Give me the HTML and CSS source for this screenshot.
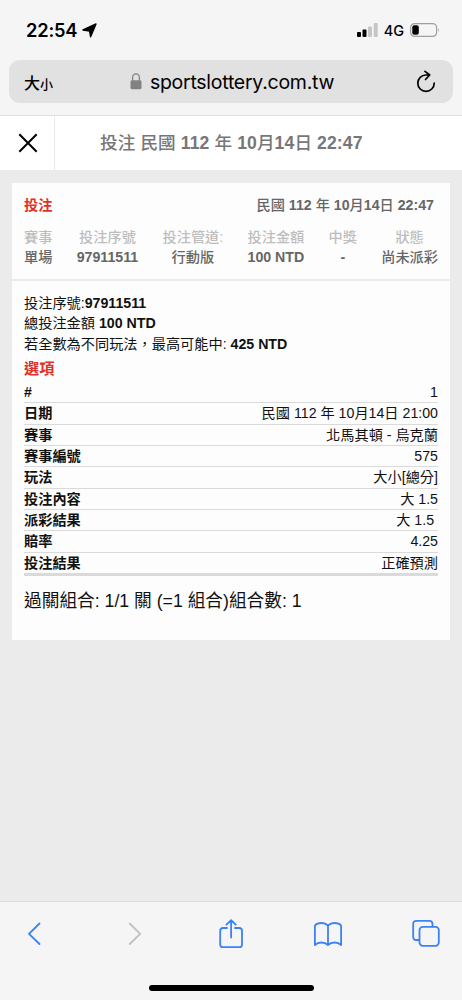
FILE: index.html
```html
<!DOCTYPE html>
<html lang="zh-Hant">
<head>
    <meta charset="UTF-8">
    <meta name="viewport" content="width=device-width, initial-scale=1.0">
    <title>投注</title>
    <link rel="stylesheet" href="styles.css">
</head>
<body>
    <div class="browser-top">
        <div class="status-bar">
            <span class="time">22:54</span>
            <svg class="location" width="15" height="15" viewBox="0 0 15 15"><path d="M14 1 L8.6 13.8 L7.6 8 L1 7 Z" fill="#000" stroke="#000" stroke-width="1.4" stroke-linejoin="round"/></svg>
            <svg class="signal" width="21" height="14" viewBox="0 0 21 14">
                <rect x="0" y="9" width="4" height="5" rx="1"/>
                <rect x="5.5" y="6.5" width="4" height="7.5" rx="1"/>
                <rect x="11" y="3.5" width="4" height="10.5" rx="1" fill="#c6c6c6"/>
                <rect x="16.7" y="0" width="4" height="14" rx="1" fill="#c6c6c6"/>
            </svg>
            <span class="network">4G</span>
            <svg class="battery" width="30" height="14" viewBox="0 0 30 14">
                <rect x=".6" y=".6" width="26" height="12.8" rx="4" fill="none" stroke="#a0a0a0" stroke-width="1.2"/>
                <rect x="2.3" y="2.2" width="6.5" height="9.6" rx="2"/>
                <path d="M28 5 Q29.7 7 28 9 Z" fill="#a0a0a0"/>
            </svg>
        </div>
        <div class="address-bar">
            <span class="text-size">大<small>小</small></span>
            <div class="address">
                <svg width="12" height="17" viewBox="0 0 12 17"><path d="M2.6 8 V4.5 a3.4 3.6 0 0 1 6.8 0 V8" fill="none" stroke="#828282" stroke-width="1.3"/><rect x=".5" y="7.3" width="11" height="9" rx="1.5" fill="#828282"/></svg>
                <span>sportslottery.com.tw</span>
            </div>
            <svg class="reload" width="20" height="23" viewBox="0 0 20 23"><path d="M10 5 A8.2 8.2 0 1 0 18.2 13.2 M10 5 H13.5 M9 1.3 L13.7 5 L9.5 9.5" fill="none" stroke="#000" stroke-width="1.7" stroke-linecap="round" stroke-linejoin="round"/></svg>
        </div>
    </div>
    <header class="page-header">
        <div class="close">
            <svg width="20" height="20" viewBox="0 0 20 20"><path d="M1.3 1.3 L18.7 18.7 M18.7 1.3 L1.3 18.7" stroke="#000" stroke-width="2"/></svg>
        </div>
        <h1>投注 民國 <b>112</b> 年 <b>10</b>月<b>14</b>日 <b>22:47</b></h1>
    </header>
    <main>
        <section class="summary">
            <div class="summary-title">
                <span class="red">投注</span>
                <span>民國 <b>112</b> 年 <b>10</b>月<b>14</b>日 <b>22:47</b></span>
            </div>
            <div class="columns">
                <div><label>賽事</label><span>單場</span></div>
                <div><label>投注序號</label><b>97911511</b></div>
                <div><label>投注管道:</label><span>行動版</span></div>
                <div><label>投注金額</label><b>100 NTD</b></div>
                <div><label>中獎</label><b>-</b></div>
                <div><label>狀態</label><span>尚未派彩</span></div>
            </div>
        </section>
        <section class="details">
            <p>投注序號:<b>97911511</b></p>
            <p>總投注金額 <b>100 NTD</b></p>
            <p>若全數為不同玩法，最高可能中: <b>425 NTD</b></p>
            <h2>選項</h2>
            <div class="rows">
                <div class="row"><b>#</b><span>1</span></div>
                <div class="row"><b>日期</b><span>民國 112 年 10月14日 21:00</span></div>
                <div class="row"><b>賽事</b><span>北馬其頓 - 烏克蘭</span></div>
                <div class="row"><b>賽事編號</b><span>575</span></div>
                <div class="row"><b>玩法</b><span>大小[總分]</span></div>
                <div class="row"><b>投注內容</b><span>大 1.5</span></div>
                <div class="row"><b>派彩結果</b><span>大 1.5&nbsp;</span></div>
                <div class="row"><b>賠率</b><span>4.25</span></div>
                <div class="row"><b>投注結果</b><span>正確預測</span></div>
            </div>
            <div class="combination">過關組合: 1/1 關 (=1 組合)組合數: 1</div>
        </section>
    </main>
    <footer class="browser-bottom">
        <nav>
            <svg width="28" height="30" viewBox="0 0 28 30"><path d="M18.5 4.5 L8 14.8 L18.5 25"/></svg>
            <svg class="disabled" width="28" height="30" viewBox="0 0 28 30"><path d="M10.7 4.5 L21.2 14.8 L10.7 25"/></svg>
            <svg width="28" height="30" viewBox="0 0 28 30"><path d="M10 9 H6 Q3.2 9 3.2 11.8 V25.4 Q3.2 28.2 6 28.2 H22.2 Q25 28.2 25 25.4 V11.8 Q25 9 22.2 9 H18 M14.1 18.5 V1.5 M9.5 5.7 L14.1 1.2 L18.7 5.7"/></svg>
            <svg width="28" height="30" viewBox="0 0 28 30"><path d="M14 6.5 Q11.5 4 7.5 4 Q3 4 .9 6.5 V26 Q3.5 23.5 7.5 23.5 Q11.5 23.5 14 26 Q16.5 23.5 20.5 23.5 Q24.5 23.5 27.1 26 V6.5 Q25 4 20.5 4 Q16.5 4 14 6.5 V26"/></svg>
            <svg width="28" height="30" viewBox="0 0 28 30"><path d="M7 21 H4.5 Q1.2 21 1.2 17.7 V5 Q1.2 1.8 4.5 1.8 H17.2 Q20.5 1.8 20.5 5 V7.5"/><rect x="7.5" y="7.8" width="19.3" height="19" rx="3.3"/></svg>
        </nav>
        <div class="home-indicator"></div>
    </footer>
</body>
</html>
```
FILE: styles.css
```css
*{
    margin:0;
    padding:0;
    box-sizing:border-box;
}
body{
    width:462px;
    height:1000px;
    display:flex;
    flex-direction:column;
    overflow:hidden;
    background-color:#ebebeb;
    font-family:"Liberation Sans","Noto Sans CJK TC",sans-serif;
    font-size:14.2px;
    color:#111;
}
svg{
    display:block;
    flex:none;
}
.browser-top{
    height:116px;
    background-color:#f5f5f5;
    border-bottom:1px solid #dedede;
}
.status-bar{
    height:60px;
    display:flex;
    align-items:center;
    padding:0 22px 0 26px;
    font-family:Inter,sans-serif;
    color:#000;
}
.time{
    font-size:18.3px;
    font-weight:600;
    letter-spacing:-0.2px;
}
.location{
    margin-left:5px;
}
.signal{
    margin-left:auto;
}
.network{
    margin:0 6px;
    font-size:14.5px;
    font-weight:500;
}
.address-bar{
    height:43px;
    margin:0 9px;
    padding:0 17px 0 15px;
    display:flex;
    align-items:center;
    justify-content:space-between;
    border-radius:11px;
    background-color:#e1e1e1;
    color:#000;
}
.text-size{
    width:30px;
    font-size:16px;
    font-weight:500;
}
.text-size small{
    font-size:13px;
}
.address{
    display:flex;
    align-items:center;
    gap:8px;
    margin-right:6px;
    font-family:Inter,sans-serif;
    font-size:19.5px;
    letter-spacing:-0.26px;
}
.page-header{
    height:54px;
    display:flex;
    background-color:#fff;
}
.close{
    width:55px;
    display:flex;
    align-items:center;
    justify-content:center;
    padding-left:2px;
    border-right:1px solid #ebebeb;
}
h1{
    padding-left:45px;
    font-size:17.6px;
    font-weight:500;
    letter-spacing:0.1px;
    line-height:54px;
    color:#777;
    white-space:nowrap;
}
main{
    flex:1;
    padding:13px 12px;
}
section{
    background-color:#fdfdfd;
    padding:0 12px;
}
.summary{
    height:96px;
    padding-top:12px;
    margin-bottom:2px;
}
.summary-title{
    display:flex;
    justify-content:space-between;
    padding-right:4px;
    line-height:20px;
    font-weight:500;
    color:#666;
}
.red{
    font-weight:bold;
    color:#e03028;
}
.columns{
    display:flex;
    justify-content:space-between;
    margin-top:12px;
    text-align:center;
    line-height:20px;
    color:#666;
}
.columns label{
    display:block;
    font-weight:500;
    color:#bdbdbd;
}
.columns b,
.columns span{
    display:block;
}
.columns span{
    font-weight:500;
}
.details{
    height:359px;
    padding-top:12px;
}
.details p{
    line-height:20.3px;
}
h2{
    font-size:15.2px;
    line-height:29px;
    margin-bottom:-1px;
    color:#e03028;
}
.row{
    height:21.33px;
    display:flex;
    justify-content:space-between;
    line-height:20px;
    border-bottom:1px solid #dadada;
}
.row:last-child{
    height:23px;
    border-bottom:3px solid #dadada;
}
.combination{
    margin-top:12px;
    font-size:17.7px;
    line-height:26px;
}
.browser-bottom{
    height:99px;
    background-color:#f5f5f5;
    border-top:1px solid #dadada;
}
nav{
    display:flex;
    justify-content:space-between;
    padding:17px 22px 0 21px;
}
nav svg{
    fill:none;
    stroke:#3b82f6;
    stroke-width:1.8;
    stroke-linecap:round;
    stroke-linejoin:round;
}
nav .disabled{
    stroke:#c0c0c0;
}
.home-indicator{
    width:165px;
    height:6px;
    margin:36px auto 0;
    border-radius:3px;
    background-color:#000;
}
```
